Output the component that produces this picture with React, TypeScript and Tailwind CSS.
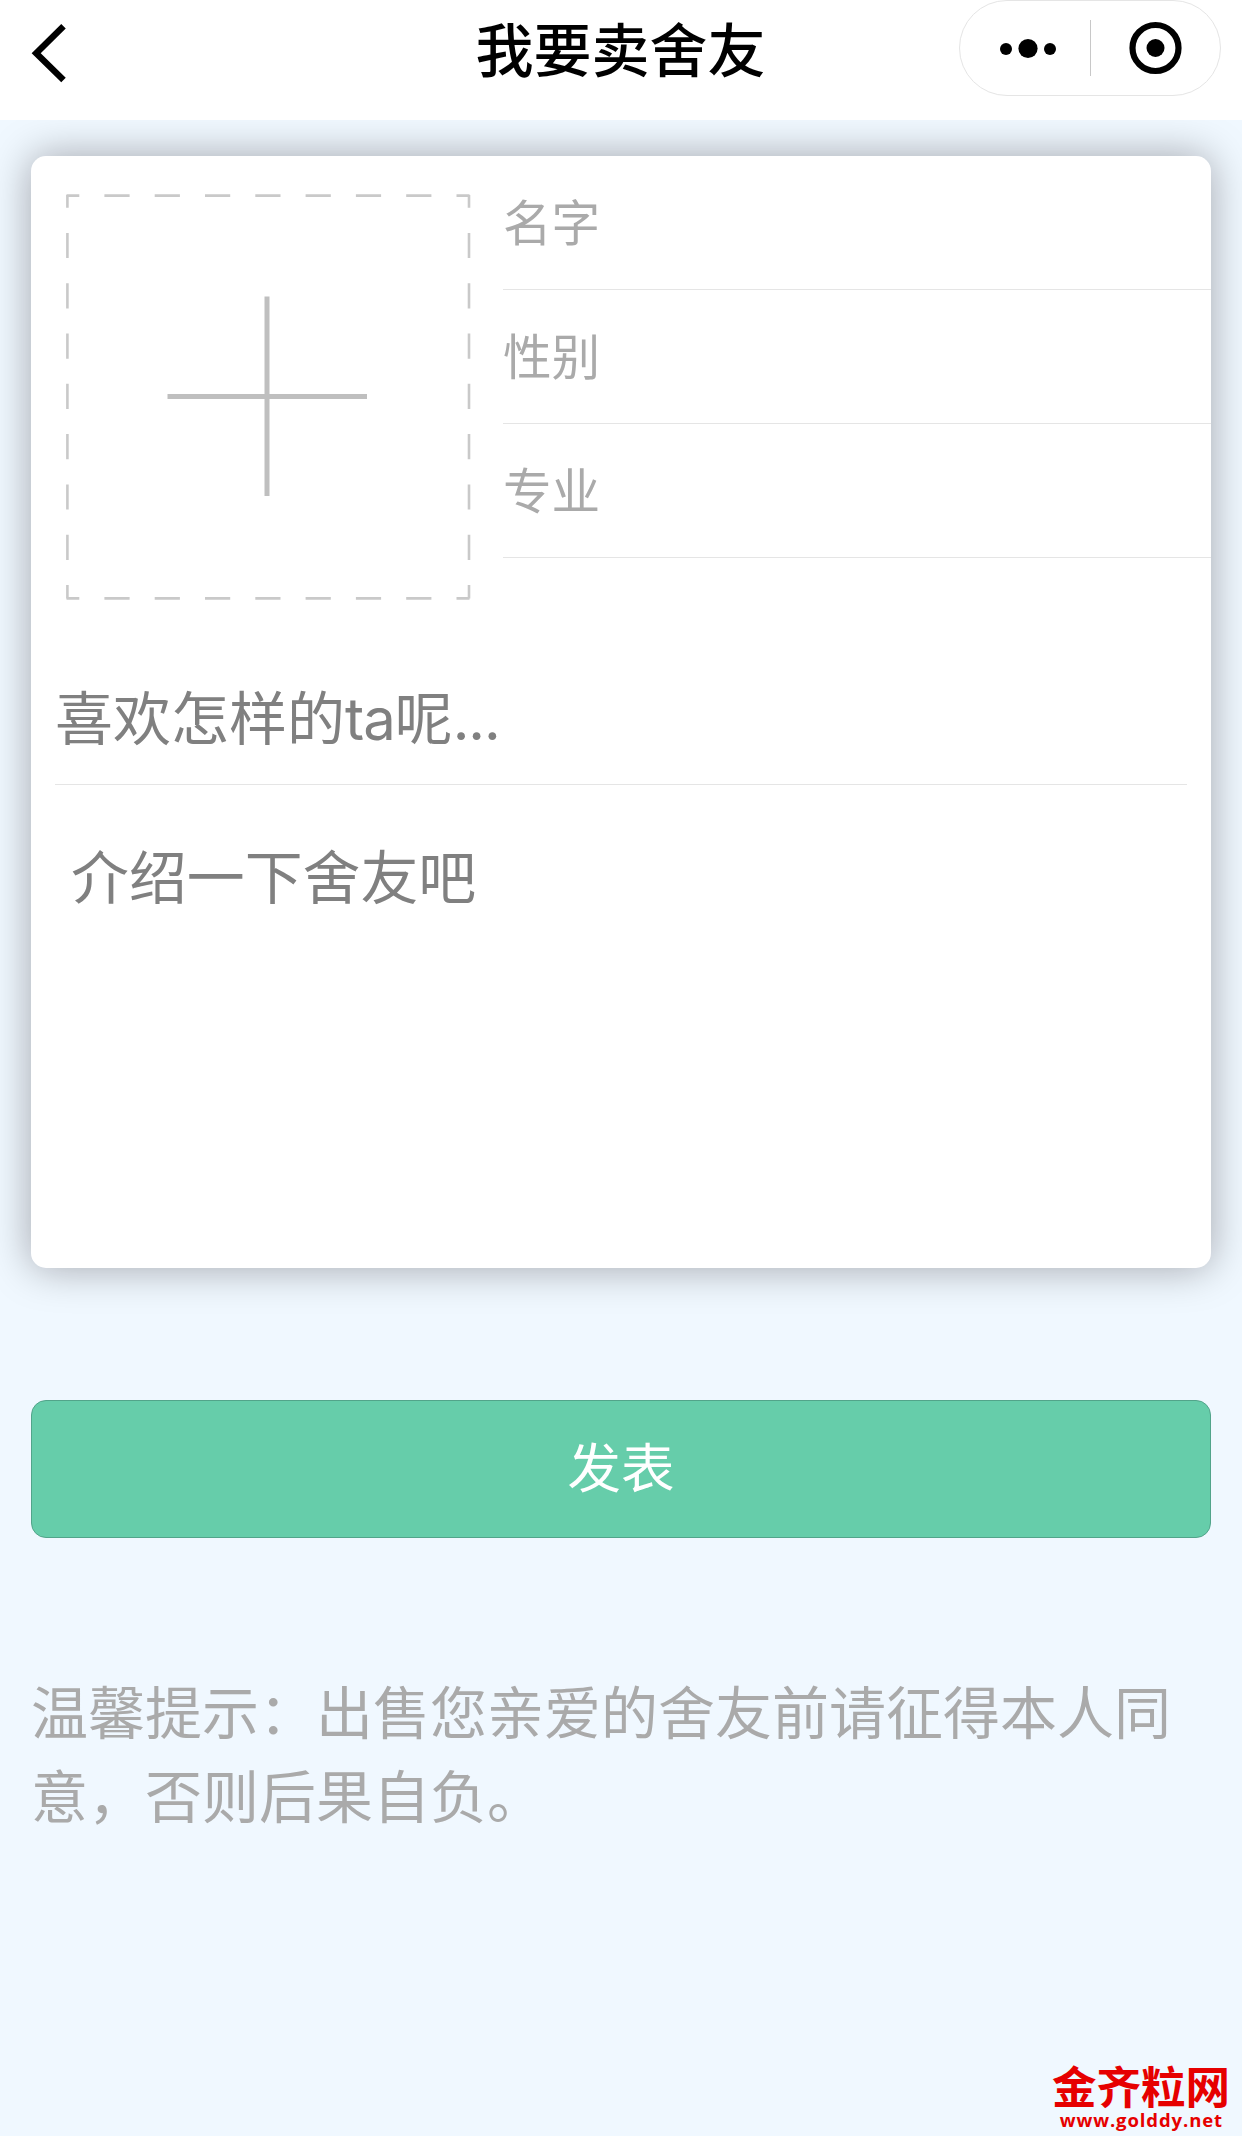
import type { ReactNode } from 'react';

const fields = ['名字', '性别', '专业'];

function NavBar() {
  return (
    <header className="relative z-10 flex h-[120px] items-start justify-between bg-white pr-[21px] pl-[30px] text-black">
      <svg className="mt-[22px]" width="38" height="62" viewBox="0 0 38 62" fill="none">
        <path d="M33.5 4.2 6.2 31.2 33.5 58" stroke="currentColor" strokeWidth="6.4" />
      </svg>
      <h1 className="ml-[214px] text-[58px] leading-[95px] font-medium">我要卖舍友</h1>
      <div className="flex h-24 w-[262px] items-center rounded-full border border-[#e5e5e5]">
        <svg width="130" height="94" viewBox="0 0 130 94" fill="currentColor">
          <circle cx="46" cy="48" r="6" />
          <circle cx="68" cy="47.5" r="9.6" />
          <circle cx="90" cy="48" r="6" />
        </svg>
        <div className="h-14 w-px bg-[#c8c8c8]" />
        <svg width="129" height="94" viewBox="0 0 129 94">
          <circle cx="64.500" cy="47" r="23" fill="none" stroke="currentColor" strokeWidth="6.2" />
          <circle cx="64.500" cy="47" r="9" fill="currentColor" />
        </svg>
      </div>
    </header>
  );
}

function UploadBox() {
  return (
    <svg className="mt-[37px] ml-[34px] shrink-0" width="408" height="410" viewBox="0 0 408 410" fill="none">
      <g stroke="#c9c9c9" strokeWidth="2.6" strokeDasharray="25.2 25.1" strokeDashoffset="12.4">
        <path d="M1.5 2.6H404.5" />
        <path d="M1.5 405.4H404.5" />
        <path d="M2.4 2V405.4" />
        <path d="M404 2V405.4" />
      </g>
      <path d="M202 103.5V303M102.5 203.6H302" stroke="#bfbfbf" strokeWidth="5" />
    </svg>
  );
}

function Field({ children }: { children: ReactNode }) {
  return (
    <div className="h-[134px] border-b border-[#e5e5e5] text-[48.600px] leading-[128px] text-[#aaa]">
      {children}
    </div>
  );
}

export default function App() {
  return (
    <div
      lang="zh-CN"
      className="flex h-[2136px] w-[1242px] flex-col overflow-hidden bg-[#f0f8ff] font-['Noto_Sans_CJK_SC',sans-serif]"
    >
      <NavBar />

      <main className="flex flex-col px-[31px] pt-9">
        <section className="flex h-[1112px] flex-col rounded-[15px] bg-white shadow-[0_0_41px_rgba(10,0,10,0.34)]">
          <div className="flex h-[490px]">
            <UploadBox />
            <div className="ml-[30px] flex-1">
              {fields.map((f) => (
                <Field key={f}>{f}</Field>
              ))}
            </div>
          </div>
          <div className="mr-6 ml-6 h-[139px] border-b border-[#e5e5e5] text-[58px] leading-[138px] text-[#808080]">
            喜欢怎样的<span className="font-[Inter,'Liberation_Sans',sans-serif] tracking-[-1px]">ta</span>呢
            <span className="font-[Inter,'Liberation_Sans',sans-serif] tracking-[-1.200px]">...</span>
          </div>
          <div className="mt-[49px] ml-10 text-[57.900px] leading-[80px] text-[#808080]">介绍一下舍友吧</div>
        </section>

        <button className="mt-[132px] h-[138px] rounded-[15px] border border-[#52a48a] bg-[#66cdaa] pb-[7px] text-[53.500px] text-white">
          发表
        </button>

        <p className="mt-[129px] text-[57px] leading-[84px] text-[#aaa]">
          温馨提示：出售您亲爱的舍友前请征得本人同意，否则后果自负。
        </p>
      </main>

      <footer className="mt-auto flex flex-col items-end pr-3 pb-1.5 text-[#e60000]">
        <div className="text-[44.500px] leading-[48px] font-bold">金齐粒网</div>
        <div className="mt-px mr-[7px] font-['Open_Sans',sans-serif] text-[18.500px] leading-[20px] font-bold tracking-[0.900px]">
          www.golddy.net
        </div>
      </footer>
    </div>
  );
}
